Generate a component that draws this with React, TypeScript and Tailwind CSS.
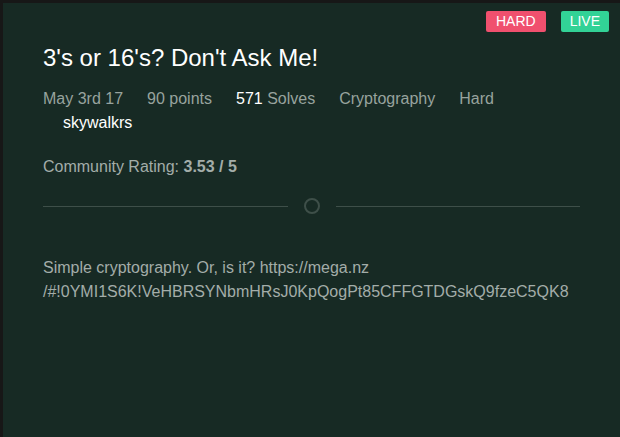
import React from "react";

//---------------------------------Data---------------------------------
const meta = [
  { label: "May 3rd 17" },
  { label: "90 points" },
  { strong: "571", label: " Solves" },
  { label: "Cryptography" },
  { label: "Hard" },
];

const App: React.FC = () => {
  //---------------------------------UI---------------------------------
  return (
    <div
      className="w-[620px] h-[437px] bg-[#171717] pt-[3px] pl-[3px] overflow-hidden"
      style={{ fontFamily: '"Liberation Sans", Arial, sans-serif' }}
    >
      <div className="relative w-full h-full bg-[#172a24] pl-[40px] pr-[40px] pt-[40px]">
        {/* badges */}
        <div className="absolute top-[8px] right-[11px] flex gap-[15px]">
          <span className="h-[21px] px-[10px] rounded-[2px] bg-[#f0506e] text-white text-[14px] leading-[21px]">
            HARD
          </span>
          <span className="h-[21px] px-[9px] rounded-[2px] bg-[#32d296] text-white text-[14px] leading-[21px]">
            LIVE
          </span>
        </div>

        <h1 className="text-[24px] leading-[30px] text-white">
          3's or 16's? Don't Ask Me!
        </h1>

        <div className="mt-[14px] flex flex-wrap text-[16px] leading-[24px] text-[#97a39e]">
          {meta.map((m, i) => (
            <span key={i} className="mr-[24px]">
              {m.strong && <span className="text-white">{m.strong}</span>}
              {m.label}
            </span>
          ))}
        </div>
        <div className="pl-[20px] text-[16px] leading-[24px] text-white">
          skywalkrs
        </div>

        <p className="mt-[20px] text-[16px] leading-[24px] text-[#a3ada9]">
          Community Rating: <b className="font-bold">3.53 / 5</b>
        </p>

        {/* divider */}
        <div className="mt-[19px] flex items-center gap-[16px]">
          <div className="flex-1 h-px bg-[#3e4f49]" />
          <div className="w-[16px] h-[16px] rounded-full border-2 border-[#3e4f49]" />
          <div className="flex-1 h-px bg-[#3e4f49]" />
        </div>

        <p className="mt-[42px] text-[16px] leading-[24px] text-[#a3ada9] break-all">
          Simple cryptography. Or, is it? https://mega.nz
          <br />
          /#!0YMI1S6K!VeHBRSYNbmHRsJ0KpQogPt85CFFGTDGskQ9fzeC5QK8
        </p>
      </div>
    </div>
  );
};

export default App;
